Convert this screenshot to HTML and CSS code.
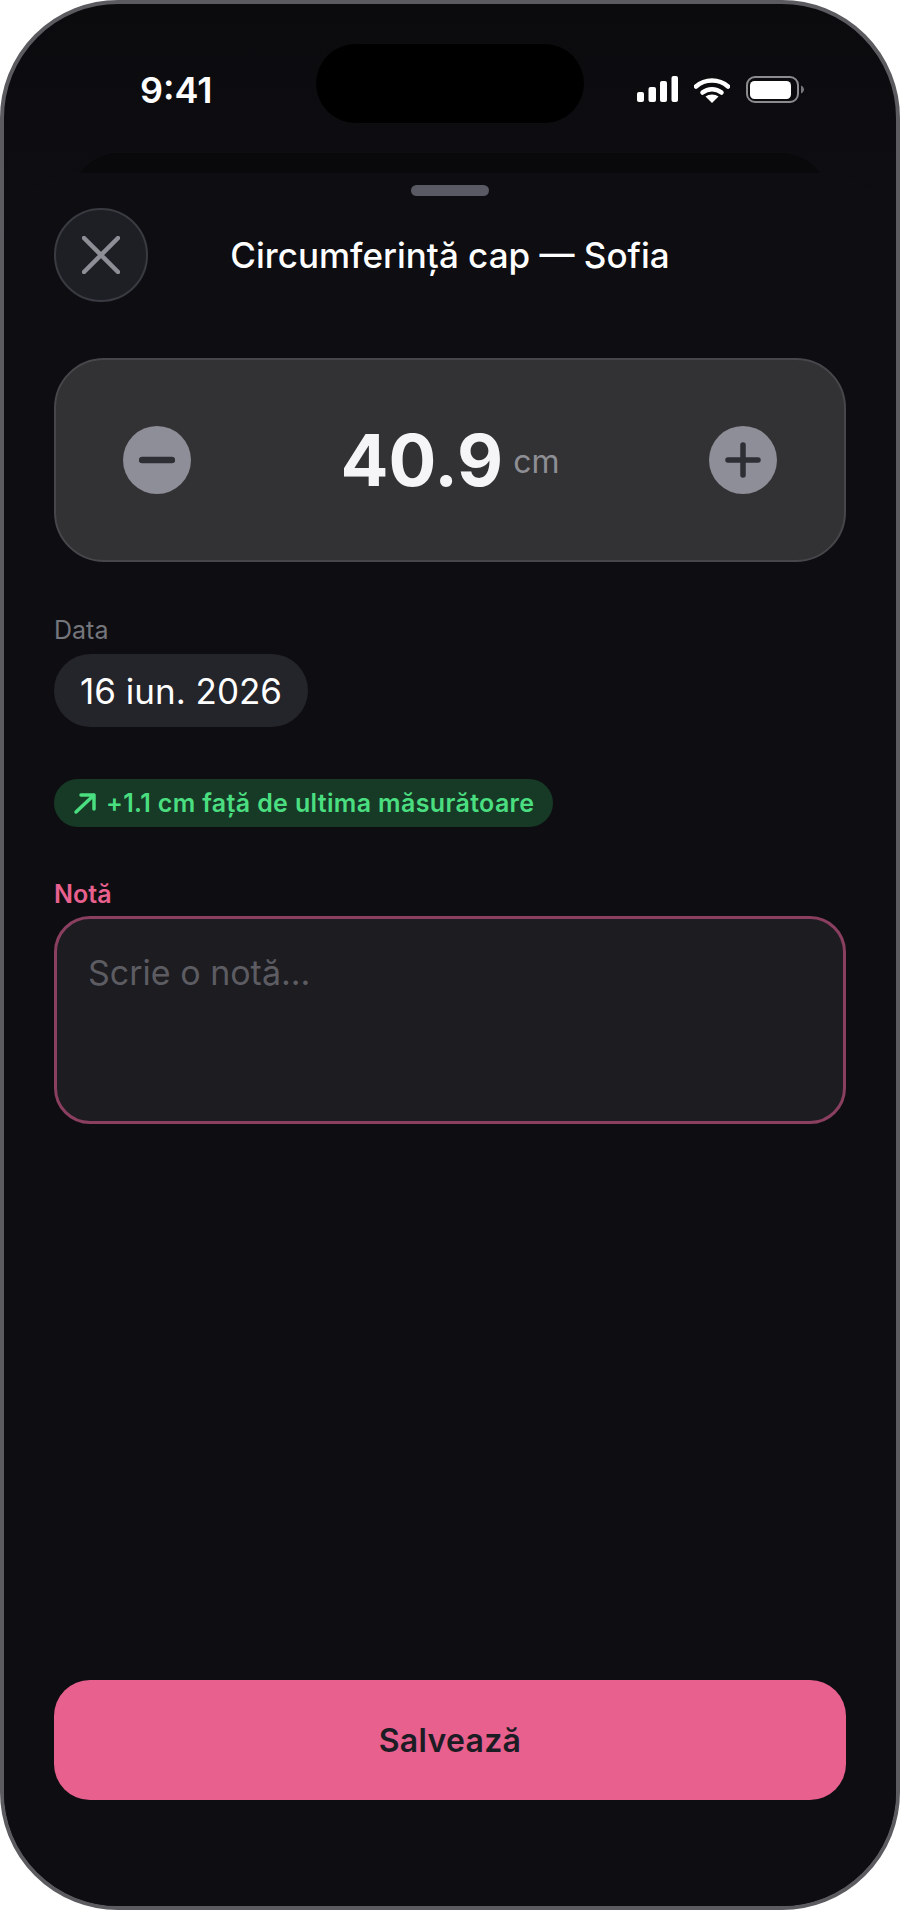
FILE: index.html

```html
<!DOCTYPE html>
<html lang="ro">
<head>
  <meta charset="UTF-8" />
  <meta name="viewport" content="width=device-width, initial-scale=1.0"/>
  <title>Circumferință cap — Sofia</title>
  <link rel="stylesheet" href="styles.css">
</head>
<body>
  <div class="phone">
    <div class="island"></div>
    <div class="back-card"></div>

    <div class="statusbar">
      <span class="time">9:41</span>
      <div class="status-icons">
        <svg class="ic-signal" width="41" height="27" viewBox="0 0 41 27">
          <rect x="0" y="16" width="7" height="10" rx="2" fill="#fff"/>
          <rect x="11.5" y="11" width="7.5" height="15" rx="2" fill="#fff"/>
          <rect x="23" y="5" width="7" height="21" rx="2" fill="#fff"/>
          <rect x="34.500" y="0" width="6.500" height="26" rx="2" fill="#fff"/>
        </svg>
        <svg class="ic-wifi" width="36" height="27" viewBox="0 0 36 27">
          <path d="M2 10.500C11 2.500 25 2.500 34 10.500" fill="none" stroke="#fff" stroke-width="4.500" stroke-linecap="round"/>
          <path d="M8.500 16.500C14 12 22 12 27.500 16.500" fill="none" stroke="#fff" stroke-width="4.500" stroke-linecap="round"/>
          <path d="M18 27L11.500 20.500C15 17.800 21 17.800 24.500 20.500Z" fill="#fff"/>
        </svg>
        <svg class="ic-battery" width="58" height="27" viewBox="0 0 58 27">
          <rect x="1" y="1" width="51" height="25" rx="8" fill="none" stroke="#8c8c8f" stroke-width="2"/>
          <rect x="4" y="5" width="41" height="18" rx="4.500" fill="#fff"/>
          <path d="M55 9.500C57 10.500 58 12 58 13.500C58 15 57 16.500 55 17.500Z" fill="#77777a"/>
        </svg>
      </div>
    </div>

    <div class="sheet">
      <div class="handle"></div>

      <div class="sheet-header">
        <button class="close-btn">
          <svg width="38" height="38" viewBox="0 0 38 38">
            <path d="M2 2L36 36M36 2L2 36" fill="none" stroke="#8e8e96" stroke-width="4.500" stroke-linecap="round"/>
          </svg>
        </button>
        <h1 class="sheet-title">Circumferință cap — Sofia</h1>
        <div class="header-spacer"></div>
      </div>

      <div class="stepper">
        <button class="step-btn">
          <svg width="36" height="36" viewBox="0 0 36 36">
            <path d="M3 18H33" fill="none" stroke="#2e2e35" stroke-width="6.500" stroke-linecap="round"/>
          </svg>
        </button>
        <div class="value">
          <span class="value-num">40.9</span>
          <span class="value-unit">cm</span>
        </div>
        <button class="step-btn">
          <svg width="36" height="36" viewBox="0 0 36 36">
            <path d="M3 18H33M18 3V33" fill="none" stroke="#2e2e35" stroke-width="5.500" stroke-linecap="round"/>
          </svg>
        </button>
      </div>

      <div class="field-label">Data</div>
      <div class="date-pill">16 iun. 2026</div>

      <div class="delta-badge">
        <svg width="24" height="24" viewBox="0 0 24 24">
          <path d="M3 21L21 4M8 4H21V18" fill="none" stroke="#4ade80" stroke-width="3.500" stroke-linecap="round" stroke-linejoin="round"/>
        </svg>
        <span>+1.1 cm față de ultima măsurătoare</span>
      </div>

      <div class="field-label note-label">Notă</div>
      <div class="note-box">Scrie o notă...</div>

      <button class="save-btn">Salvează</button>
    </div>
  </div>
</body>
</html>
```

FILE: styles.css

```css
* { box-sizing: border-box; }
body {
  margin: 0;
  background: #fff;
  font-family: 'Inter', 'Liberation Sans', sans-serif;
}
button {
  border: 0;
  padding: 0;
  font-family: inherit;
}
.phone {
  position: relative;
  display: flex;
  flex-direction: column;
  width: 900px;
  height: 1910px;
  overflow: hidden;
  background: linear-gradient(#0b0b0e, #0e0e12 200px);
  border: 4px solid #5b5b60;
  border-radius: 118px;
}
.island {
  position: absolute;
  top: 40px;
  left: 312px;
  width: 268px;
  height: 79px;
  background: #000;
  border-radius: 40px;
}
.back-card {
  position: absolute;
  top: 149px;
  left: 66px;
  width: 760px;
  height: 60px;
  background: #09090c;
  border-radius: 50px 50px 0 0;
}

/* status bar */
.statusbar {
  display: flex;
  flex: none;
  align-items: flex-start;
  justify-content: space-between;
  height: 169px;
  padding: 72px 92px 0 136px;
}
.time {
  color: #fff;
  font-size: 36px;
  font-weight: 600;
  line-height: 28px;
}
.status-icons {
  display: flex;
  gap: 16px;
}

/* sheet */
.sheet {
  position: relative;
  display: flex;
  flex: 1;
  flex-direction: column;
  padding: 12px 50px 106px 50px;
  background: #0e0e12;
  border-radius: 70px 70px 0 0;
}
.handle {
  flex: none;
  align-self: center;
  width: 78px;
  height: 11px;
  background: #5a5a64;
  border-radius: 6px;
}
.sheet-header {
  display: flex;
  align-items: center;
  margin-top: 12px;
}
.close-btn {
  display: flex;
  flex: none;
  align-items: center;
  justify-content: center;
  width: 94px;
  height: 94px;
  background: #1e1f25;
  border: 2px solid #3a3b42;
  border-radius: 50%;
}
.sheet-title {
  flex: 1;
  margin: 0;
  color: #fff;
  font-size: 35px;
  font-weight: 500;
  text-align: center;
}
.header-spacer {
  flex: none;
  width: 94px;
}

/* stepper */
.stepper {
  display: flex;
  flex: none;
  align-items: center;
  justify-content: space-between;
  height: 204px;
  margin-top: 56px;
  padding: 0 67px 0 67px;
  background: #323235;
  border: 2px solid #47474b;
  border-radius: 50px;
}
.step-btn {
  display: flex;
  align-items: center;
  justify-content: center;
  width: 68px;
  height: 68px;
  background: #8e8e98;
  border-radius: 50%;
}
.value {
  display: flex;
  align-items: center;
  gap: 10px;
}
.value-num {
  color: #f5f5f7;
  font-size: 71px;
  font-weight: 700;
}
.value-unit {
  margin-top: 3px;
  color: #8e8e94;
  font-size: 32px;
}

/* fields */
.field-label {
  margin-top: 55px;
  color: #75757c;
  font-size: 25px;
  line-height: 26px;
}
.date-pill {
  align-self: flex-start;
  height: 73px;
  margin-top: 11px;
  padding: 0 26px;
  color: #fff;
  font-size: 35px;
  line-height: 75px;
  background: #24242b;
  border-radius: 37px;
}
.delta-badge {
  display: flex;
  align-items: center;
  align-self: flex-start;
  gap: 9px;
  height: 48px;
  margin-top: 52px;
  padding: 0 19px;
  color: #4ade80;
  font-size: 25px;
  font-weight: 600;
  letter-spacing: 0.35px;
  background: #173a27;
  border-radius: 24px;
}
.note-label {
  margin-top: 54px;
  color: #e8608e;
  font-weight: 600;
}
.note-box {
  flex: none;
  height: 208px;
  margin-top: 9px;
  padding: 33px 31px;
  color: #5c5c62;
  font-size: 34px;
  background: #1c1c21;
  border: 3px solid #8a3f60;
  border-radius: 36px;
}
.save-btn {
  flex: none;
  height: 120px;
  margin-top: auto;
  color: #1c1c24;
  font-size: 32px;
  font-weight: 600;
  letter-spacing: 0.3px;
  background: #e8608e;
  border-radius: 36px;
}
```
